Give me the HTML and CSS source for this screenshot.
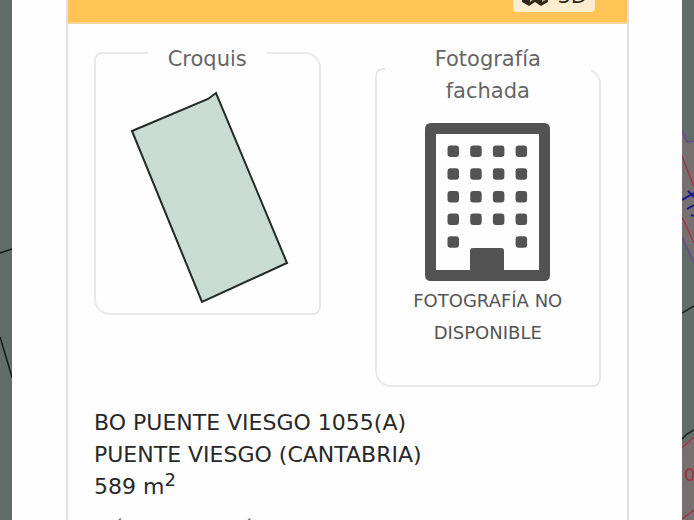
FILE: index.html
```html
<!DOCTYPE html>
<html lang="es">
<head>
  <meta charset="UTF-8" />
  <meta name="viewport" content="width=device-width, initial-scale=1.0" />
  <title>Parcela catastral</title>
  <link rel="stylesheet" href="styles.css">
</head>
<body>
  <!-- map behind the dialog -->
  <svg class="map map-left" width="12" height="520" viewBox="0 0 12 520" aria-hidden="true">
    <path d="M0 253L12 249M0 337L12 377" stroke="#111a16" stroke-width="1.5" fill="none" />
  </svg>
  <svg class="map map-right" width="12" height="520" viewBox="0 0 12 520" aria-hidden="true">
    <path d="M0 130L5 142L12 140V264L0 236Z" fill="#777071" />
    <path d="M0 445L12 436V520H0Z" fill="#777071" />
    <path d="M0 130L5 142L12 141M0 237L12 263" stroke="#66518a" stroke-width="2" fill="none" />
    <path d="M0 156L12 187M0 217L12 243M0 448L12 437M0 519L12 510" stroke="#a23443" stroke-width="1.5" fill="none" />
    <path d="M0 200L12 193M5 209L12 205M9 215L12 216M6 191L12 197" stroke="#1c1592" stroke-width="2" fill="none" />
    <path d="M0 313L12 306M0 439L5 434L12 430" stroke="#17221d" stroke-width="1.5" fill="none" />
    <text class="map-label" x="2" y="481">0</text>
  </svg>

  <main class="modal">
    <section class="panel">
      <header class="panel-heading">
        <button type="button" class="btn-3d">
          <svg width="28" height="20" viewBox="0 0 28 20" aria-hidden="true">
            <path d="M7 0L14 4L21 0L27 4V16L20 20L14 16L8 20L1 16V4Z" fill="#30291b" />
            <path d="M9 10L12 8V14L9 16ZM21 10L25 8V14L21 16Z" fill="#b8aa8c" />
          </svg>
          <span>3D</span>
        </button>
      </header>

      <div class="figures">
        <fieldset class="figure">
          <legend>Croquis</legend>
          <svg class="sketch" viewBox="0 0 166 214" role="img" aria-label="Croquis de la parcela">
            <path d="M8 40L84 8L92 2L163 172L78 211Z" />
          </svg>
        </fieldset>
        <fieldset class="figure">
          <legend>Fotografía fachada</legend>
          <svg class="building" viewBox="0 0 125 158" aria-hidden="true">
            <path fill-rule="evenodd" d="M6 0H119Q125 0 125 6V152Q125 158 119 158H6Q0 158 0 152V6Q0 0 6 0ZM11 11V147H45V128Q45 125 48 125H76Q79 125 79 128V147H114V11Z" />
            <g id="windows"></g>
          </svg>
          <p class="no-photo">FOTOGRAFÍA NO DISPONIBLE</p>
        </fieldset>
      </div>

      <div class="details">
        <p class="address">BO PUENTE VIESGO 1055(A)<br>PUENTE VIESGO (CANTABRIA)<br>589 m<sup>2</sup></p>
        <p class="more">Más información de la parcela</p>
      </div>
    </section>
  </main>

  <script src="building.js"></script>
</body>
</html>
```

FILE: styles.css
```css
* {
  box-sizing: border-box;
}
body {
  margin: 0;
  height: 100vh;
  overflow: hidden;
  background: #616d68;
  font-family: Verdana, "DejaVu Sans", sans-serif;
  font-size: 21px;
  line-height: 32px;
  color: #282828;
}
.map {
  position: absolute;
  top: 0;
}
.map-left {
  left: 0;
}
.map-right {
  right: 0;
}
.map-label {
  font-size: 18px;
  fill: #a22f36;
}
.modal {
  margin: 0 12px;
  padding: 0 53px 0 54px;
  min-height: 100vh;
  background: #fefefe;
}
.panel {
  min-height: 100vh;
  border: solid #dfdfdf;
  border-width: 0 2px;
}
.panel-heading {
  display: flex;
  justify-content: flex-end;
  align-items: flex-end;
  height: 24px;
  padding: 0 32px 10px 0;
  background: #fec556;
  border-bottom: 2px solid #f3d599;
}
.btn-3d {
  display: flex;
  flex-shrink: 0;
  align-items: center;
  gap: 8px;
  height: 32px;
  padding: 0 8px;
  border: 0;
  border-radius: 4px;
  background: #feecce;
  color: #30291b;
  font: inherit;
  cursor: pointer;
}
.figures {
  display: grid;
  grid-template-columns: 1fr 1fr;
  align-items: start;
  gap: 54px;
  padding: 7px 26px 0;
}
.figure {
  min-width: 0;
  margin: 0;
  padding: 0 8px 8px;
  border: 2px solid #e8e8e8;
  border-radius: 8px 16px 8px 16px;
  text-align: center;
}
.figure legend {
  margin: 0 auto;
  padding: 12px 20px 0;
  color: #666;
}
.sketch {
  display: block;
  width: 166px;
  margin: 16px auto 0;
  fill: #c8dcd4;
  stroke: #222a26;
  stroke-width: 2;
}
.building {
  display: block;
  width: 125px;
  margin: 16px auto 0;
  fill: #535353;
}
.no-photo {
  margin: 4px 0 28px;
  font-size: 18px;
  color: #555;
}
.details {
  padding: 20px 26px;
}
.details p {
  margin: 0 0 10px;
}
.details .address {
  font-size: 22px;
}
.details sup {
  font-size: 18px;
  line-height: 0;
}
.details .more {
  color: #666;
}
```

FILE: building.js
```js
const windows = document.getElementById("windows");

function addWindow(col, row) {
  const rect = document.createElementNS("http://www.w3.org/2000/svg", "rect");
  rect.setAttribute("x", 22.5 + col * 22.7);
  rect.setAttribute("y", 22.5 + row * 22.7);
  rect.setAttribute("width", 11.5);
  rect.setAttribute("height", 11.5);
  rect.setAttribute("rx", 3);
  windows.appendChild(rect);
}

for (let row = 0; row < 5; row++) {
  for (let col = 0; col < 4; col++) {
    // the door takes the middle of the ground floor
    if (row === 4 && (col === 1 || col === 2)) continue;
    addWindow(col, row);
  }
}
```
